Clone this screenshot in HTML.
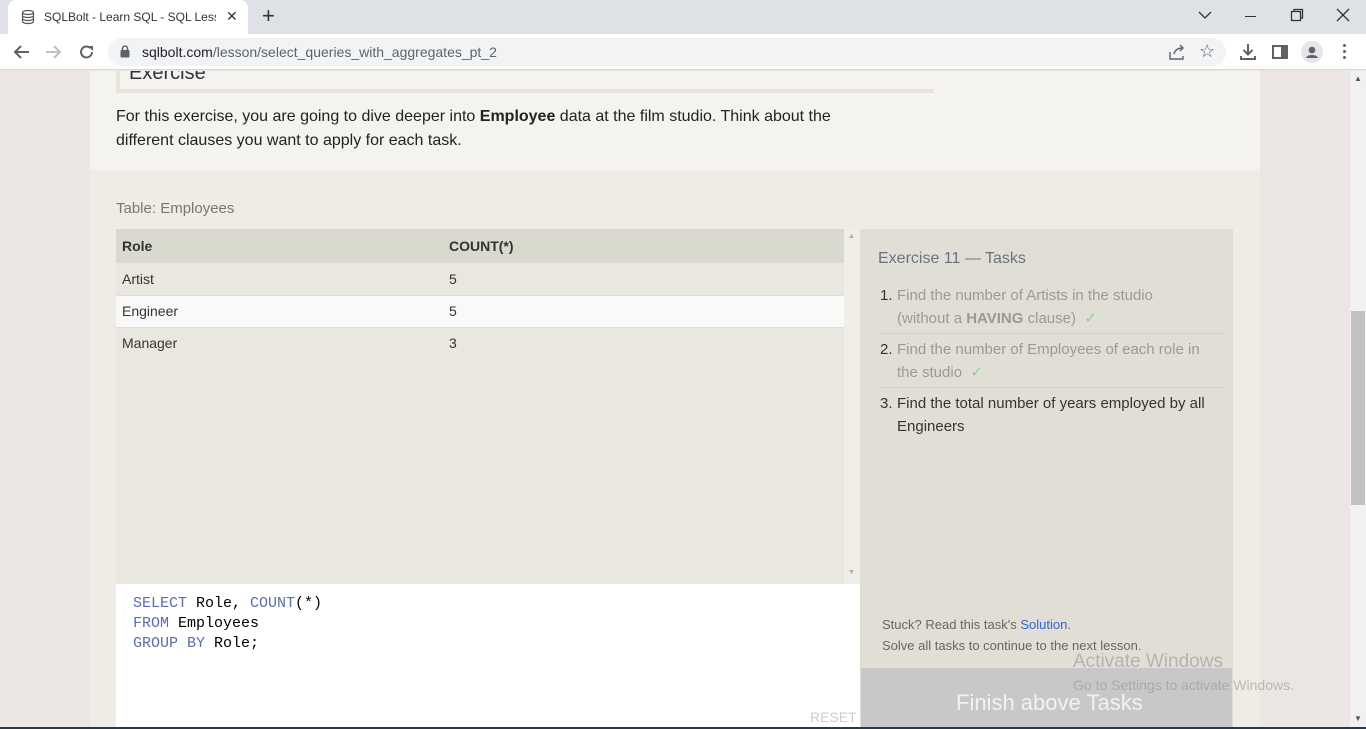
<!DOCTYPE html>
<html><head><meta charset="utf-8"><style>
*{margin:0;padding:0;box-sizing:border-box}
body{width:1366px;height:729px;overflow:hidden;font-family:"Liberation Sans",sans-serif;background:#ece7e4;position:relative}
.a{position:absolute}
.tabbar{left:0;top:0;width:1366px;height:34px;background:#dee1e6}
.tab{left:8px;top:0;width:240px;height:34px;background:#fff;border-radius:8px 8px 0 0}
.addr{left:0;top:34px;width:1366px;height:36px;background:#fff;border-bottom:1px solid #d5d7da}
.omni{left:108px;top:38px;width:1118px;height:28px;background:#f1f3f4;border-radius:14px}
.ic{color:#5f6368;font-size:16px}
.col{left:90px;top:71px;width:1170px;height:99px;background:#f4f3ef}
.ex{left:90px;top:170px;width:1170px;height:559px;background:#efece5}
.side{left:1260px;top:71px;width:90px;height:658px;background:#ebe6e3}
.sb{left:1350px;top:71px;width:16px;height:658px;background:#f1f1f1}
td{font-size:14px;color:#333;padding-left:6px}
.n{width:17px;flex:none;color:#333}
.t{white-space:nowrap}
</style></head><body>
<div class="a tabbar"></div>
<div class="a tab"></div>
<svg class="a" style="left:20px;top:9px" width="16" height="16" viewBox="0 0 16 16"><ellipse cx="8" cy="3.5" rx="5.5" ry="2" fill="none" stroke="#555" stroke-width="1.2"/><path d="M2.5 3.5v9c0 1.1 2.5 2 5.5 2s5.5-.9 5.5-2v-9M2.5 6.5c0 1.1 2.5 2 5.5 2s5.5-.9 5.5-2M2.5 9.5c0 1.1 2.5 2 5.5 2s5.5-.9 5.5-2" fill="none" stroke="#555" stroke-width="1.2"/></svg>
<div class="a" style="left:44px;top:10px;font-size:12px;color:#333;width:172px;overflow:hidden;white-space:nowrap">SQLBolt - Learn SQL - SQL Lesson</div>
<div class="a" style="left:226px;top:8px;font-size:14px;color:#333">✕</div>
<div class="a" style="left:262px;top:3px;font-size:22px;color:#333">+</div>
<svg class="a" style="left:1198px;top:10px" width="14" height="10"><path d="M1 2l6 6 6-6" fill="none" stroke="#333" stroke-width="1.3"/></svg>
<div class="a" style="left:1245px;top:16px;width:11px;height:1px;background:#333"></div>
<svg class="a" style="left:1290px;top:8px" width="14" height="14"><rect x="1.5" y="3.5" width="9" height="9" fill="none" stroke="#333" stroke-width="1.3"/><path d="M4 3.5V1.5h8.5V10h-2" fill="none" stroke="#333" stroke-width="1.3"/></svg>
<svg class="a" style="left:1336px;top:8px" width="14" height="14"><path d="M1 1l12 12M13 1L1 13" stroke="#333" stroke-width="1.3"/></svg>
<div class="a addr"></div>
<div class="a omni"></div>
<svg class="a" style="left:12px;top:44px" width="18" height="16"><path d="M17 8H3M9 2L3 8l6 6" fill="none" stroke="#5f6368" stroke-width="2"/></svg>
<svg class="a" style="left:45px;top:44px" width="18" height="16"><path d="M1 8h14M9 2l6 6-6 6" fill="none" stroke="#bdc1c6" stroke-width="2"/></svg>
<svg class="a" style="left:78px;top:43px" width="18" height="18"><path d="M14 9a5.5 5.5 0 1 1-1.6-3.9" fill="none" stroke="#5f6368" stroke-width="2"/><path d="M10 3h5v5z" fill="#5f6368"/></svg>
<svg class="a" style="left:120px;top:45px" width="10" height="13"><rect x="0.5" y="5" width="9" height="7.5" rx="1" fill="#5f6368"/><path d="M2.5 5V3.5a2.5 2.5 0 0 1 5 0V5" fill="none" stroke="#5f6368" stroke-width="1.5"/></svg>
<div class="a" style="left:142px;top:44px;font-size:14px;color:#202124">sqlbolt.com<span style="color:#5f6368">/lesson/select_queries_with_aggregates_pt_2</span></div>
<svg class="a" style="left:1168px;top:44px" width="18" height="16"><path d="M2 8v7h13v-3M6 10c1-4 4-6 9-6M12 1l3 3-3 3" fill="none" stroke="#5f6368" stroke-width="1.4"/></svg>
<div class="a ic" style="left:1199px;top:41px;font-size:18px">☆</div>
<svg class="a" style="left:1239px;top:43px" width="18" height="18"><path d="M9 1v10M4.5 7l4.5 4.5L13.5 7M2 13v3h14v-3" fill="none" stroke="#5f6368" stroke-width="2"/></svg>
<svg class="a" style="left:1272px;top:45px" width="16" height="14"><rect x="1" y="1" width="14" height="12" fill="none" stroke="#5f6368" stroke-width="2"/><rect x="9" y="1" width="6" height="12" fill="#5f6368"/></svg>
<div class="a" style="left:1301px;top:41px;width:22px;height:22px;border-radius:50%;background:#e3e5e8"></div>
<svg class="a" style="left:1301px;top:41px" width="22" height="22"><circle cx="11" cy="9" r="3.3" fill="#5f6368"/><path d="M5 17c1-4 11-4 12 0z" fill="#5f6368"/></svg>
<div class="a" style="left:1343px;top:44px;width:3px;height:3px;border-radius:50%;background:#5f6368;box-shadow:0 6px 0 #5f6368,0 12px 0 #5f6368"></div>

<div class="a side"></div>
<div class="a col"></div>
<div class="a" style="left:116px;top:71px;width:818px;height:22px;border-left:4px solid #e6e4d9;border-bottom:4px solid #e6e4d9"></div>
<div class="a" style="left:129px;top:60px;font-size:20px;color:#333;line-height:26px;clip-path:inset(11px 0 0 0)">Exercise</div>
<div class="a" style="left:116px;top:105px;font-size:16px;line-height:24px;color:#222;width:775px">For this exercise, you are going to dive deeper into <b>Employee</b> data at the film studio. Think about the different clauses you want to apply for each task.</div>

<div class="a ex"></div>
<div class="a" style="left:116px;top:200px;font-size:15px;color:#777">Table: Employees</div>
<div class="a" style="left:116px;top:229px;width:728px;height:355px;background:#e9e7df"></div>
<table class="a" style="left:116px;top:229px;width:728px;border-collapse:collapse">
<tr style="height:34px;background:#dad9cd"><td style="width:327px;font-weight:bold">Role</td><td style="font-weight:bold">COUNT(*)</td></tr>
<tr style="height:32px;border-bottom:1px solid #ddd"><td>Artist</td><td>5</td></tr>
<tr style="height:32px;background:#f9f9f7;border-bottom:1px solid #ddd"><td>Engineer</td><td>5</td></tr>
<tr style="height:32px"><td>Manager</td><td>3</td></tr>
</table>
<div class="a" style="left:844px;top:229px;width:16px;height:355px;background:#efeee9"></div>
<div class="a" style="left:848px;top:233px;font-size:7px;color:#aaa">▲</div>
<div class="a" style="left:848px;top:569px;font-size:7px;color:#aaa">▼</div>
<div class="a" style="left:116px;top:584px;width:744px;height:145px;background:#fff"></div>
<pre class="a" style="left:133px;top:594px;font-family:'Liberation Mono',monospace;font-size:15px;line-height:20px;color:#000"><span style="color:#5a6ea8">SELECT</span> Role, <span style="color:#5a6ea8">COUNT</span>(*)
<span style="color:#5a6ea8">FROM</span> Employees
<span style="color:#5a6ea8">GROUP BY</span> Role;</pre>
<div class="a" style="left:810px;top:709px;font-size:14px;color:#ccc">RESET</div>

<div class="a" style="left:860px;top:229px;width:373px;height:500px;background:#e1dfd5"></div>
<div class="a" style="left:878px;top:250px;font-size:16px;color:#6b7380">Exercise 11 — Tasks</div>
<div class="a" style="left:880px;top:284px;width:345px;font-size:15px;line-height:23px;color:#999">
<div style="display:flex;border-bottom:1px solid #d2d0c5;padding-bottom:3px"><span class="n">1.</span><span class="t">Find the number of Artists in the studio<br>(without a <b>HAVING</b> clause) &nbsp;<span style="color:#8fcf9a">✓</span></span></div>
<div style="display:flex;border-bottom:1px solid #d2d0c5;padding:4px 0 3px"><span class="n">2.</span><span class="t">Find the number of Employees of each role in<br>the studio &nbsp;<span style="color:#8fcf9a">✓</span></span></div>
<div style="display:flex;padding-top:4px;color:#333"><span class="n">3.</span><span class="t">Find the total number of years employed by all<br>Engineers</span></div>
</div>
<div class="a" style="left:882px;top:614px;font-size:13px;line-height:21px;color:#666">Stuck? Read this task's <span style="color:#3366dd">Solution</span>.<br>Solve all tasks to continue to the next lesson.</div>
<div class="a" style="left:861px;top:668px;width:371px;height:61px;background:#c8c8c8"></div>
<div class="a" style="left:956px;top:690px;font-size:22px;color:#f2f2f2">Finish above Tasks</div>
<div class="a" style="left:1073px;top:651px;font-size:19px;color:rgba(150,150,150,.6)">Activate Windows</div>
<div class="a" style="left:1073px;top:677px;font-size:14px;color:rgba(150,150,150,.6)">Go to Settings to activate Windows.</div>

<div class="a sb"></div>
<div class="a" style="left:1351px;top:311px;width:14px;height:194px;background:#c1c1c1"></div>
<div class="a" style="left:1354px;top:74px;font-size:8px;color:#555">▲</div>
<div class="a" style="left:1354px;top:714px;font-size:8px;color:#555">▼</div>
<div class="a" style="left:0;top:727px;width:1366px;height:2px;background:#2b3a4a"></div>
</body></html>
